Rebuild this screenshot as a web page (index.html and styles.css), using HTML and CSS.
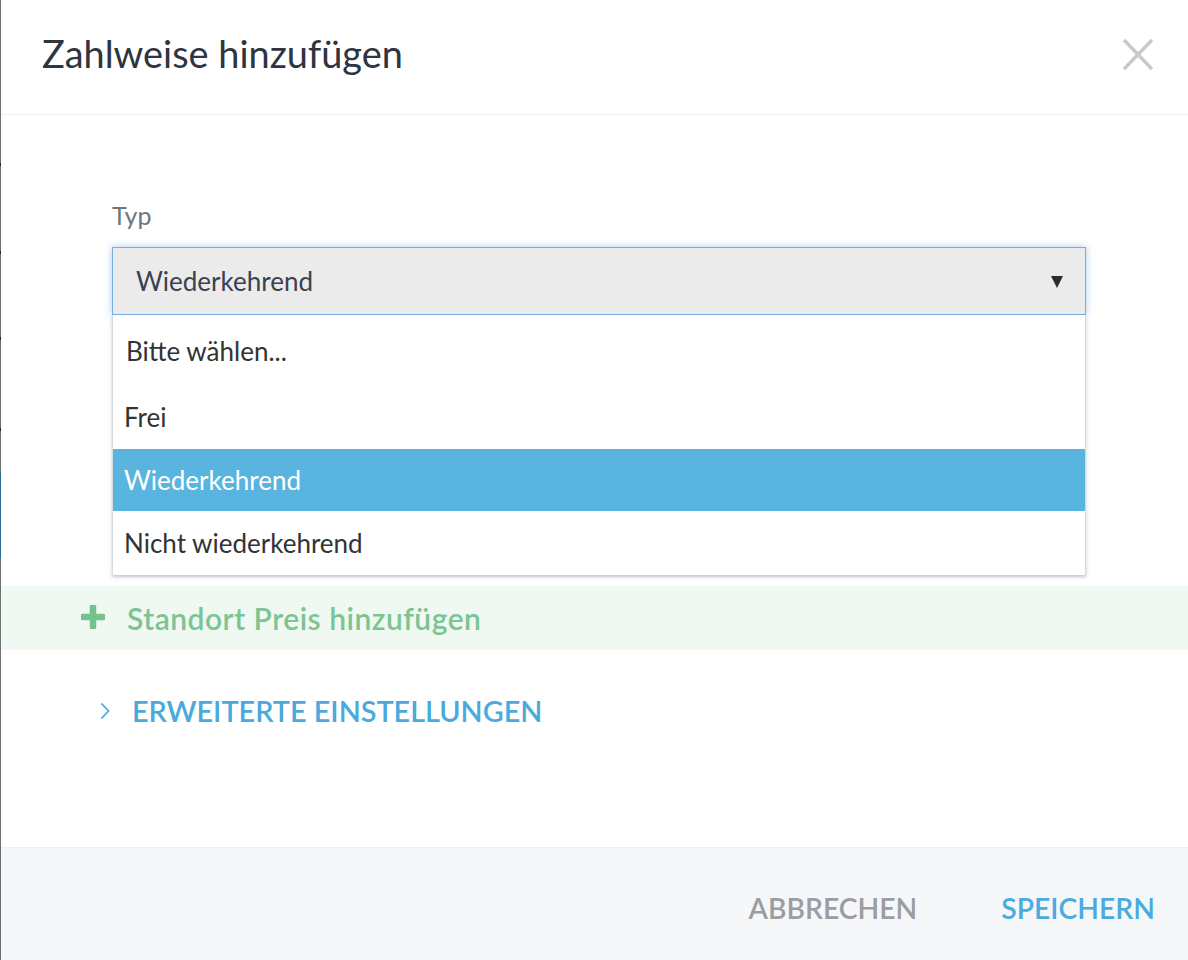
FILE: index.html
```html
<!DOCTYPE html>
<html lang="de">
<head>
  <meta charset="UTF-8">
  <meta name="viewport" content="width=device-width, initial-scale=1.0">
  <title>Zahlweise hinzufügen</title>
  <link rel="stylesheet" href="styles.css">
</head>
<body>
  <div class="modal">
    <div class="modal-header">
      <h1>Zahlweise hinzufügen</h1>
      <button class="close" aria-label="Schließen">
        <svg width="32" height="33" viewBox="0 0 32 33"><path d="M2 2 L30 31 M30 2 L2 31" stroke="#c9c9c9" stroke-width="3.4" fill="none"/></svg>
      </button>
    </div>

    <div class="modal-body">
      <div class="field">
        <label>Typ</label>
        <div class="select">
          <span>Wiederkehrend</span>
          <span class="caret"></span>
          <ul class="options">
            <li class="first">Bitte wählen...</li>
            <li>Frei</li>
            <li class="active">Wiederkehrend</li>
            <li>Nicht wiederkehrend</li>
          </ul>
        </div>
      </div>

      <div class="add-row">
        <svg class="plus" width="24" height="24" viewBox="0 0 24 24"><path d="M12 2 V22 M2 12 H22" stroke="#76c28c" stroke-width="6.5" stroke-linecap="round" fill="none"/></svg>
        <span>Standort Preis hinzufügen</span>
      </div>

      <div class="advanced">
        <svg class="chevron" width="10" height="18" viewBox="0 0 10 18"><path d="M1.5 1.5 L8.5 9 L1.5 16.5" stroke="#4aa9dd" stroke-width="1.8" fill="none"/></svg>
        <span>Erweiterte Einstellungen</span>
      </div>
    </div>

    <div class="modal-footer">
      <button class="btn btn-cancel">Abbrechen</button>
      <button class="btn btn-save">Speichern</button>
    </div>
  </div>
</body>
</html>
```

FILE: styles.css
```css
body {
  margin: 0;
  background:
    linear-gradient(to bottom,
      #6d7176 0, #6d7176 163px, #1f2a35 163px, #1f2a35 166px,
      #6d7176 166px, #6d7176 251px, #1f2a35 251px, #1f2a35 254px,
      #6d7176 254px, #6d7176 337px, #1f2a35 337px, #1f2a35 340px,
      #6d7176 340px, #6d7176 428px, #1f2a35 428px, #1f2a35 431px,
      #6d7176 431px, #6d7176 472px, #2b6a92 472px, #2b6a92 558px,
      #6d7176 558px);
  font-family: Lato, "Open Sans", sans-serif;
}
.modal {
  margin-left: 1px;
  height: 960px;
  background-color: #fff;
  display: flex;
  flex-direction: column;
}
.modal-header {
  height: 114px;
  border-bottom: 1px solid #eff0f1;
  display: flex;
  align-items: flex-start;
  justify-content: space-between;
  padding: 0 34px 0 41px;
}
.modal-header h1 {
  margin: 0;
  padding-top: 31px;
  font-size: 37.9px;
  line-height: 45px;
  font-weight: 400;
  color: #2e3440;
}
.close {
  margin-top: 38px;
  padding: 0;
  border: none;
  background: none;
}
.close svg {
  display: block;
}
.modal-body {
  flex: 1;
  padding-top: 85px;
}
.field {
  margin: 0 102px 271px 111px;
}
.field label {
  display: block;
  font-size: 25px;
  line-height: 30px;
  color: #6c7680;
  margin-bottom: 17px;
}
.select {
  position: relative;
  height: 66px;
  border: 1px solid #78aee3;
  box-shadow: 0 0 7px rgba(96, 160, 228, 0.55);
  background-color: #ebebeb;
  display: flex;
  align-items: center;
  justify-content: space-between;
  padding: 0 22px 0 23px;
  font-size: 26px;
  color: #3a4150;
}
.caret {
  width: 0;
  height: 0;
  border-left: 6.5px solid transparent;
  border-right: 6.5px solid transparent;
  border-top: 12px solid #2b2b2b;
  margin-top: 2px;
}
.options {
  position: absolute;
  top: 67px;
  left: -1px;
  right: -1px;
  margin: 0;
  padding: 4px 0 0;
  list-style: none;
  background-color: #fff;
  border-left: 1px solid #d4dadd;
  border-right: 1px solid #d4dadd;
  box-shadow: 0 2px 3px rgba(120, 130, 140, 0.45);
  z-index: 2;
}
.options li {
  height: 64px;
  line-height: 64px;
  padding-left: 11px;
  font-size: 26px;
  color: #333;
}
.options li.first {
  height: 66px;
  line-height: 64px;
  padding-left: 13px;
}
.options li.active {
  height: 62px;
  line-height: 62px;
  background-color: #5ab4e0;
  color: #fff;
}
.add-row {
  height: 64px;
  background-color: #eff9f2;
  display: flex;
  align-items: center;
  padding-left: 80px;
  gap: 22px;
  font-size: 30px;
  font-weight: 600;
  letter-spacing: 0.5px;
  color: #7cc492;
}
.plus {
  margin-top: -2px;
}
.advanced {
  margin-top: 44px;
  display: flex;
  align-items: center;
  padding-left: 99px;
  gap: 22px;
  font-size: 28.8px;
  font-weight: 600;
  color: #4aa9dd;
  text-transform: uppercase;
}
.modal-footer {
  height: 112px;
  background-color: #f6f7f9;
  border-top: 1px solid #eef0f2;
  display: flex;
  align-items: center;
  justify-content: flex-end;
  padding-right: 33px;
  gap: 84px;
}
.btn {
  border: none;
  background: none;
  padding: 0;
  font-family: Lato, "Open Sans", sans-serif;
  font-size: 28.3px;
  font-weight: 600;
  text-transform: uppercase;
  margin-top: 8px;
}
.btn-cancel {
  color: #9b9da2;
}
.btn-save {
  color: #4aabe0;
}
```
